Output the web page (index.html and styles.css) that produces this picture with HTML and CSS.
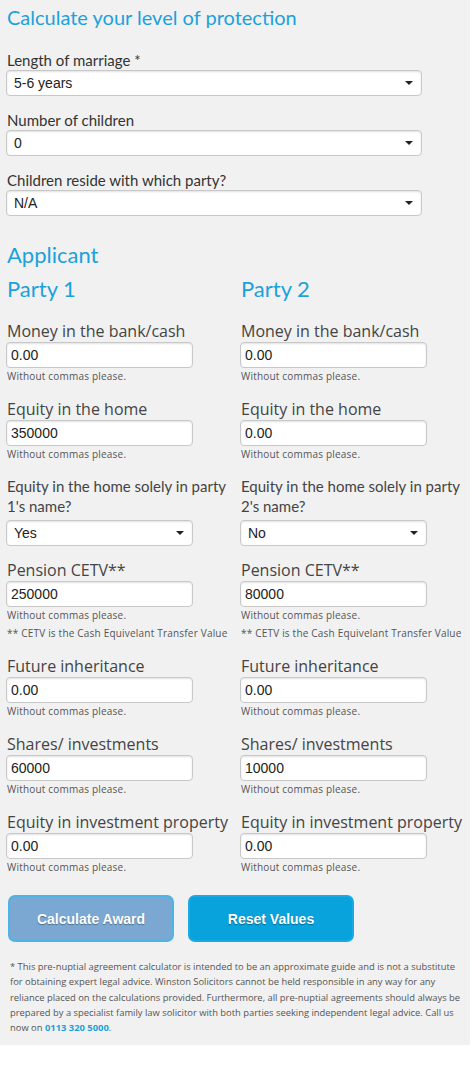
FILE: index.html
```html
<!DOCTYPE html>
<html lang="en">
<head>
    <meta charset="UTF-8">
    <meta name="viewport" content="width=device-width, initial-scale=1.0">
    <title>Calculate your level of protection</title>
    <link rel="stylesheet" href="styles.css">
</head>
<body>
    <div class="calculator">
        <h2 class="title">Calculate your level of protection</h2>
        <form id="calcForm">
            <div class="top-group">
                <label for="marriage">Length of marriage *</label>
                <div class="select-wrap wide">
                    <select id="marriage">
                        <option>5-6 years</option>
                    </select>
                </div>
            </div>
            <div class="top-group">
                <label for="children">Number of children</label>
                <div class="select-wrap wide">
                    <select id="children">
                        <option>0</option>
                    </select>
                </div>
            </div>
            <div class="top-group">
                <label for="reside">Children reside with which party?</label>
                <div class="select-wrap wide">
                    <select id="reside">
                        <option>N/A</option>
                    </select>
                </div>
            </div>

            <h3 class="applicant">Applicant</h3>
            <div class="parties">
                <div class="party">
                    <h3 class="party-title">Party 1</h3>
                    <div class="field">
                        <label for="bank1">Money in the bank/cash</label>
                        <input type="text" id="bank1" value="0.00">
                        <p class="hint">Without commas please.</p>
                    </div>
                    <div class="field">
                        <label for="home1">Equity in the home</label>
                        <input type="text" id="home1" value="350000">
                        <p class="hint">Without commas please.</p>
                    </div>
                    <div class="field">
                        <label class="alt" for="sole1">Equity in the home solely in party 1's name?</label>
                        <div class="select-wrap">
                            <select id="sole1">
                                <option>Yes</option>
                            </select>
                        </div>
                    </div>
                    <div class="field after-select">
                        <label for="pension1">Pension CETV**</label>
                        <input type="text" id="pension1" value="250000">
                        <p class="hint">Without commas please.</p>
                        <p class="hint note">** CETV is the Cash Equivelant Transfer Value</p>
                    </div>
                    <div class="field">
                        <label for="inherit1">Future inheritance</label>
                        <input type="text" id="inherit1" value="0.00">
                        <p class="hint">Without commas please.</p>
                    </div>
                    <div class="field">
                        <label for="shares1">Shares/ investments</label>
                        <input type="text" id="shares1" value="60000">
                        <p class="hint">Without commas please.</p>
                    </div>
                    <div class="field">
                        <label for="property1">Equity in investment property</label>
                        <input type="text" id="property1" value="0.00">
                        <p class="hint">Without commas please.</p>
                    </div>
                </div>
                <div class="party">
                    <h3 class="party-title">Party 2</h3>
                    <div class="field">
                        <label for="bank2">Money in the bank/cash</label>
                        <input type="text" id="bank2" value="0.00">
                        <p class="hint">Without commas please.</p>
                    </div>
                    <div class="field">
                        <label for="home2">Equity in the home</label>
                        <input type="text" id="home2" value="0.00">
                        <p class="hint">Without commas please.</p>
                    </div>
                    <div class="field">
                        <label class="alt" for="sole2">Equity in the home solely in party 2's name?</label>
                        <div class="select-wrap">
                            <select id="sole2">
                                <option>No</option>
                            </select>
                        </div>
                    </div>
                    <div class="field after-select">
                        <label for="pension2">Pension CETV**</label>
                        <input type="text" id="pension2" value="80000">
                        <p class="hint">Without commas please.</p>
                        <p class="hint note">** CETV is the Cash Equivelant Transfer Value</p>
                    </div>
                    <div class="field">
                        <label for="inherit2">Future inheritance</label>
                        <input type="text" id="inherit2" value="0.00">
                        <p class="hint">Without commas please.</p>
                    </div>
                    <div class="field">
                        <label for="shares2">Shares/ investments</label>
                        <input type="text" id="shares2" value="10000">
                        <p class="hint">Without commas please.</p>
                    </div>
                    <div class="field">
                        <label for="property2">Equity in investment property</label>
                        <input type="text" id="property2" value="0.00">
                        <p class="hint">Without commas please.</p>
                    </div>
                </div>
            </div>

            <div class="buttons">
                <button type="button" class="btn btn-calc" id="calcBtn">Calculate Award</button>
                <button type="reset" class="btn btn-reset">Reset Values</button>
            </div>
        </form>
        <p class="disclaimer">* This pre-nuptial agreement calculator is intended to be an approximate guide and is not a substitute<br>for obtaining expert legal advice. Winston Solicitors cannot be held responsible in any way for any<br>reliance placed on the calculations provided. Furthermore, all pre-nuptial agreements should always be<br>prepared by a specialist family law solicitor with both parties seeking independent legal advice. Call us<br>now on <a href="tel:01133205000">0113 320 5000</a>.</p>
    </div>
</body>
</html>
```

FILE: styles.css
```css
body {
    margin: 0;
    background: #fff;
    font-family: "Lato", sans-serif;
    color: #333;
}
.calculator {
    background: #f1f1f1;
    padding: 4px 6px 10px 6px;
    width: 458px;
}
.title {
    margin: 0 0 0 1px;
    font-family: "Lato", sans-serif;
    font-weight: normal;
    font-size: 20px;
    line-height: 26px;
    color: #1ba1dc;
}
.top-group {
    margin-top: 20px;
}
.top-group + .top-group {
    margin-top: 14px;
}
.top-group label {
    display: block;
    margin-left: 1px;
    font-size: 15px;
    line-height: 20px;
    color: #333;
}
.select-wrap {
    position: relative;
    width: 187px;
}
.select-wrap.wide {
    width: 416px;
}
.select-wrap::after {
    content: "";
    position: absolute;
    right: 9px;
    top: 11px;
    border-left: 4px solid transparent;
    border-right: 4px solid transparent;
    border-top: 4px solid #222;
}
select,
.field input {
    display: block;
    box-sizing: border-box;
    width: 100%;
    height: 26px;
    margin: 0;
    padding: 0 7px;
    border: 1px solid #c8c8c8;
    border-radius: 4px;
    background: #fff;
    box-shadow: inset 0 1px 2px rgba(0, 0, 0, 0.12);
    font-family: "Liberation Sans", Arial, sans-serif;
    font-size: 14px;
    color: #222;
    -webkit-appearance: none;
    appearance: none;
}
.field input {
    width: 187px;
    padding: 0 4px;
}
.applicant {
    margin: 26px 0 0 1px;
    font-weight: normal;
    font-size: 22px;
    line-height: 26px;
    color: #1ba1dc;
}
.parties {
    display: grid;
    grid-template-columns: 234px 224px;
}
.party-title {
    margin: 8px 0 0 1px;
    font-weight: normal;
    font-size: 22px;
    line-height: 26px;
    color: #1ba1dc;
}
.field {
    margin-top: 15px;
}
.party-title + .field {
    margin-top: 18px;
}
.field.after-select {
    margin-top: 13px;
}
.field label {
    display: block;
    margin-left: 1px;
    font-family: "Open Sans", sans-serif;
    font-size: 16px;
    line-height: 22px;
    color: #444;
    white-space: nowrap;
}
.field label.alt {
    font-family: "Lato", sans-serif;
    font-size: 15px;
    line-height: 20px;
    white-space: normal;
    margin-bottom: 4px;
}
.hint {
    margin: 2px 0 0 1px;
    font-family: "Open Sans", sans-serif;
    font-size: 10px;
    line-height: 13px;
    letter-spacing: 0.2px;
    color: #555;
    white-space: nowrap;
}
.hint.note {
    margin-top: 5px;
}
.buttons {
    display: flex;
    gap: 14px;
    margin: 21px 0 0 2px;
}
.btn {
    width: 166px;
    height: 47px;
    border-radius: 7px;
    font-family: "Liberation Sans", Arial, sans-serif;
    font-weight: bold;
    font-size: 14px;
    color: #fff;
    text-shadow: 0 1px 1px rgba(0, 0, 0, 0.35);
    cursor: pointer;
}
.btn-calc {
    background: #7aa8d2;
    border: 2px solid #4db5e6;
}
.btn-reset {
    background: #08a2dc;
    border: 2px solid #1aa9e2;
}
.btn-reset:hover {
    background: #0690c4;
}
.disclaimer {
    margin: 17px 0 0 4px;
    font-family: "Open Sans", sans-serif;
    font-size: 9.4px;
    line-height: 15.3px;
    color: #555;
    white-space: nowrap;
}
.disclaimer a {
    color: #1ba1dc;
    font-weight: bold;
    text-decoration: none;
}
```
